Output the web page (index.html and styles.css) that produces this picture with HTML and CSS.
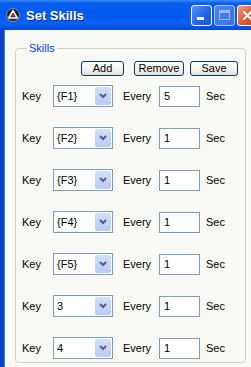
FILE: index.html
```html
<!DOCTYPE html>
<html lang="en">
<head>
    <meta charset="UTF-8">
    <title>Set Skills</title>
    <link rel="stylesheet" href="styles.css">
</head>
<body>
<div class="window">
    <div class="titlebar">
        <svg class="app-icon" width="14" height="14" viewBox="0 0 14 14">
            <circle cx="7" cy="7" r="6.5" fill="#1e232c" stroke="#8a93a6" stroke-width="1"/>
            <path d="M7 2.6 L11.2 10 L2.8 10 Z" fill="none" stroke="#fff" stroke-width="1.6" stroke-linejoin="round"/>
            <path d="M7 5.6 L8.8 8.6 L5.2 8.6 Z" fill="#c63a3a"/>
        </svg>
        <span class="title">Set Skills</span>
        <div class="controls">
            <span class="ctl min"><i></i></span>
            <span class="ctl max"><i></i></span>
            <span class="ctl close">
                <svg width="13" height="13" viewBox="0 0 13 13">
                    <path d="M3 3 L10 10 M10 3 L3 10" stroke="#fff" stroke-width="2" stroke-linecap="round"/>
                </svg>
            </span>
        </div>
    </div>
    <div class="client">
        <fieldset class="group">
            <legend>Skills</legend>
            <div class="actions">
                <button class="btn btn-add">Add</button>
                <button class="btn btn-remove">Remove</button>
                <button class="btn btn-save">Save</button>
            </div>
            <div class="rows">
                <div class="row">
                    <span class="lbl-key">Key</span>
                    <div class="combo"><span>{F1}</span><b class="drop"><svg width="8" height="6" viewBox="0 0 8 6"><path d="M1 1 L4 4 L7 1" fill="none" stroke="#4d6185" stroke-width="2"/></svg></b></div>
                    <span class="lbl-every">Every</span>
                    <div class="field">5</div>
                    <span class="lbl-sec">Sec</span>
                </div>
                <div class="row">
                    <span class="lbl-key">Key</span>
                    <div class="combo"><span>{F2}</span><b class="drop"><svg width="8" height="6" viewBox="0 0 8 6"><path d="M1 1 L4 4 L7 1" fill="none" stroke="#4d6185" stroke-width="2"/></svg></b></div>
                    <span class="lbl-every">Every</span>
                    <div class="field">1</div>
                    <span class="lbl-sec">Sec</span>
                </div>
                <div class="row">
                    <span class="lbl-key">Key</span>
                    <div class="combo"><span>{F3}</span><b class="drop"><svg width="8" height="6" viewBox="0 0 8 6"><path d="M1 1 L4 4 L7 1" fill="none" stroke="#4d6185" stroke-width="2"/></svg></b></div>
                    <span class="lbl-every">Every</span>
                    <div class="field">1</div>
                    <span class="lbl-sec">Sec</span>
                </div>
                <div class="row">
                    <span class="lbl-key">Key</span>
                    <div class="combo"><span>{F4}</span><b class="drop"><svg width="8" height="6" viewBox="0 0 8 6"><path d="M1 1 L4 4 L7 1" fill="none" stroke="#4d6185" stroke-width="2"/></svg></b></div>
                    <span class="lbl-every">Every</span>
                    <div class="field">1</div>
                    <span class="lbl-sec">Sec</span>
                </div>
                <div class="row">
                    <span class="lbl-key">Key</span>
                    <div class="combo"><span>{F5}</span><b class="drop"><svg width="8" height="6" viewBox="0 0 8 6"><path d="M1 1 L4 4 L7 1" fill="none" stroke="#4d6185" stroke-width="2"/></svg></b></div>
                    <span class="lbl-every">Every</span>
                    <div class="field">1</div>
                    <span class="lbl-sec">Sec</span>
                </div>
                <div class="row">
                    <span class="lbl-key">Key</span>
                    <div class="combo"><span>3</span><b class="drop"><svg width="8" height="6" viewBox="0 0 8 6"><path d="M1 1 L4 4 L7 1" fill="none" stroke="#4d6185" stroke-width="2"/></svg></b></div>
                    <span class="lbl-every">Every</span>
                    <div class="field">1</div>
                    <span class="lbl-sec">Sec</span>
                </div>
                <div class="row">
                    <span class="lbl-key">Key</span>
                    <div class="combo"><span>4</span><b class="drop"><svg width="8" height="6" viewBox="0 0 8 6"><path d="M1 1 L4 4 L7 1" fill="none" stroke="#4d6185" stroke-width="2"/></svg></b></div>
                    <span class="lbl-every">Every</span>
                    <div class="field">1</div>
                    <span class="lbl-sec">Sec</span>
                </div>
            </div>
        </fieldset>
    </div>
</div>
</body>
</html>
```

FILE: styles.css
```css
*{
    padding: 0;
    margin: 0;
    box-sizing: border-box;
}
body{
    overflow: hidden;
    font-family: "Liberation Sans", Arial, sans-serif;
    font-size: 11px;
    color: #000;
    background: #f9f9f6;
}
.window{
    width: 262px;
    height: 367px;
    display: flex;
    flex-direction: column;
    background: #f9f9f6;
}
.titlebar{
    height: 30px;
    flex: none;
    display: flex;
    align-items: center;
    padding: 0 4px 0 6px;
    background: linear-gradient(#3c8ffd 0, #0a5ff0 3px, #0058ee 45%, #0c5ff2 80%, #0048d8 100%);
}
.titlebar .app-icon{
    flex: none;
}
.titlebar .title{
    margin-left: 6px;
    color: #fff;
    font-weight: bold;
    font-size: 13px;
    text-shadow: 1px 1px 0 #0a2f8f;
}
.controls{
    margin-left: auto;
    display: flex;
    gap: 2px;
}
.ctl{
    width: 21px;
    height: 21px;
    border: 1px solid #fff;
    border-radius: 3px;
    display: flex;
    align-items: center;
    justify-content: center;
    background: linear-gradient(135deg, #5a92fb, #2362e8 60%, #1f56d4);
    position: relative;
}
.ctl.min i{
    position: absolute;
    left: 5px;
    bottom: 5px;
    width: 7px;
    height: 3px;
    background: #fff;
}
.ctl.max{
    border-color: #a8c4f7;
    background: linear-gradient(135deg, #4d86f3, #3770e6);
}
.ctl.max i{
    width: 11px;
    height: 10px;
    border: 1px solid #9ab8f4;
    border-top-width: 3px;
}
.ctl.close{
    background: linear-gradient(135deg, #f19b7d, #e0582d 55%, #c9421f);
}
.client{
    flex: 1;
    border-left: 4px solid #0840c6;
    box-shadow: inset 1px 0 0 #3b7cf0;
}
.group{
    width: 231px;
    margin: 12px 0 0 11px;
    padding: 6px 0 3px 6px;
    border: 1px solid #d0d0bf;
    border-radius: 4px;
}
.group legend{
    margin-left: 5px;
    padding: 0 2px;
    line-height: 13px;
    color: #0046d5;
}
.actions{
    display: flex;
    justify-content: flex-end;
    gap: 6px;
    padding-right: 7px;
}
.btn{
    height: 15px;
    border: 1px solid #003c74;
    border-radius: 3px;
    background: linear-gradient(#ffffff, #f3f3ef 60%, #e2dfd6);
    font-family: inherit;
    font-size: 11px;
    line-height: 13px;
    color: #000;
}
.btn-add{
    width: 43px;
    margin-right: 4px;
}
.btn-remove{
    width: 50px;
}
.btn-save{
    width: 48px;
}
.rows{
    margin-top: 9px;
    display: flex;
    flex-direction: column;
    gap: 20px;
}
.row{
    height: 22px;
    display: flex;
    align-items: center;
}
.lbl-key{
    width: 31px;
}
.combo{
    width: 60px;
    height: 22px;
    display: flex;
    align-items: center;
    padding-left: 3px;
    border: 1px solid #7f9db9;
    background: #fff;
}
.combo .drop{
    margin-left: auto;
    margin-right: 1px;
    width: 16px;
    height: 18px;
    display: flex;
    align-items: center;
    justify-content: center;
    border-radius: 2px;
    background: linear-gradient(#d2defc, #b9cbf6);
}
.lbl-every{
    width: 36px;
    margin-left: 10px;
}
.field{
    width: 41px;
    height: 21px;
    padding-left: 4px;
    line-height: 19px;
    border: 1px solid #7f9db9;
    background: #fff;
}
.lbl-sec{
    margin-left: 6px;
}
```
